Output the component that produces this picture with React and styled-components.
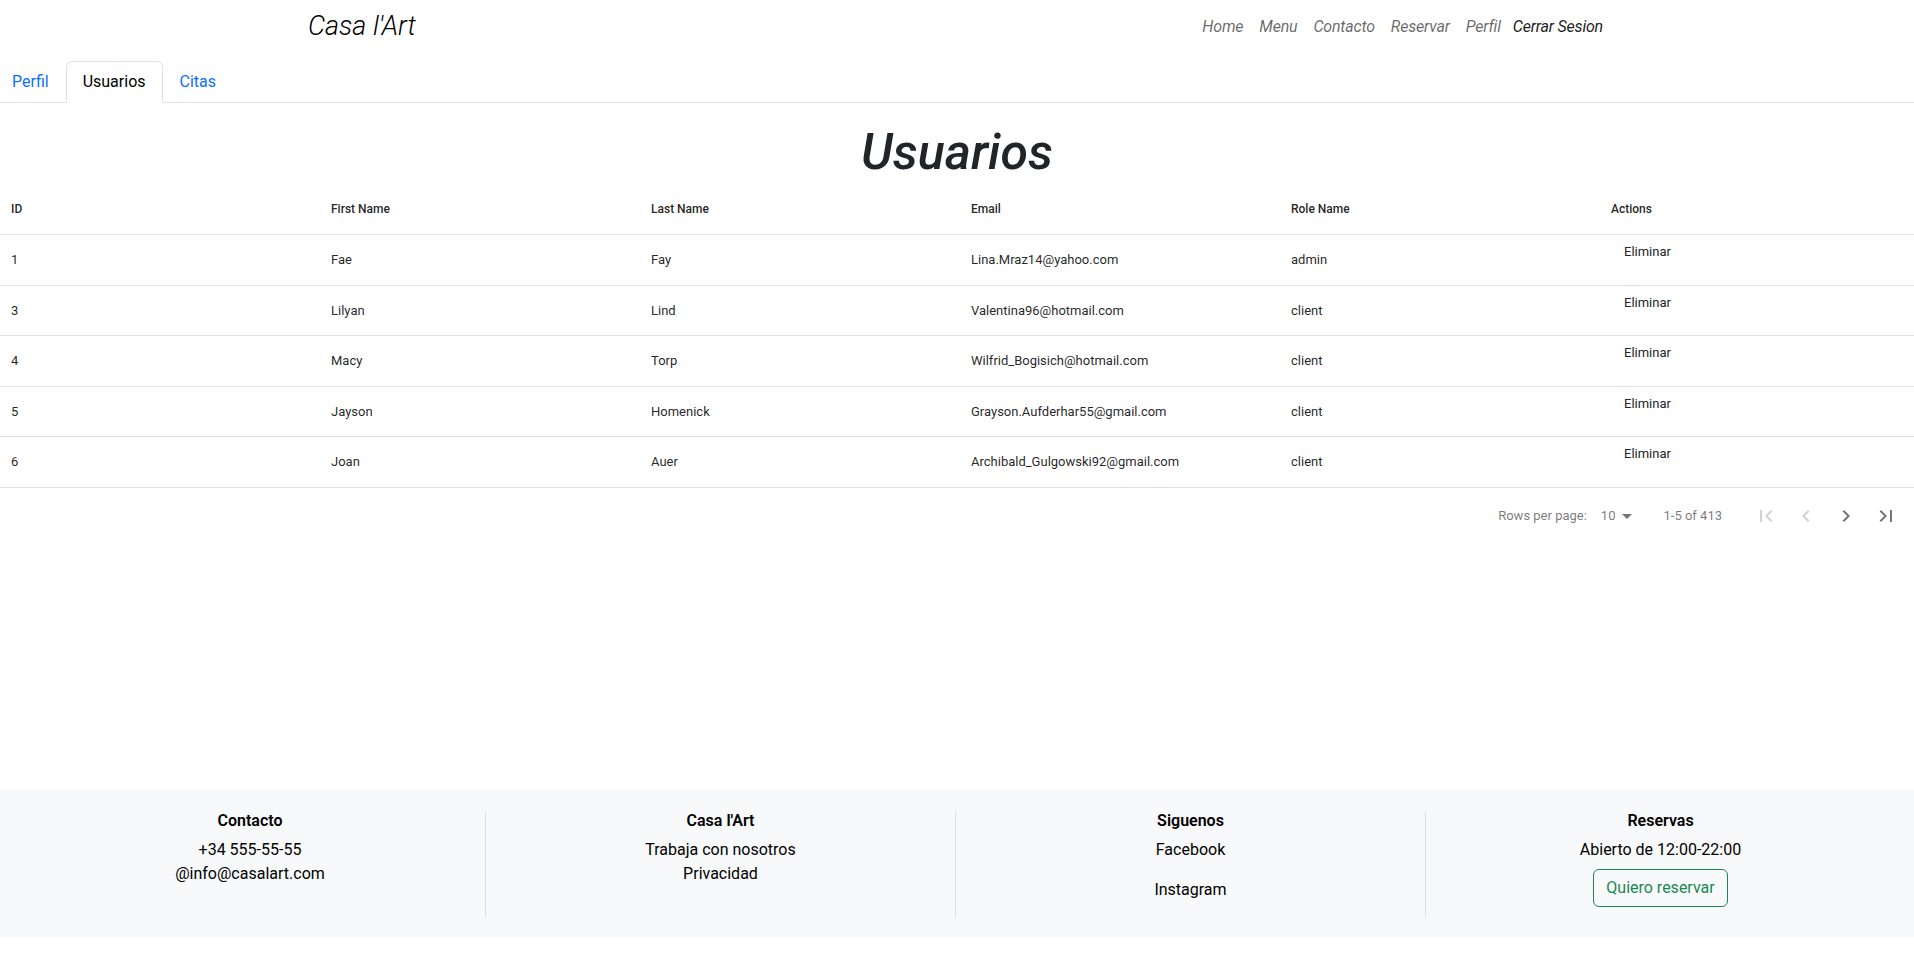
import React from "react";
import styled, { createGlobalStyle } from "styled-components";

const GlobalStyle = createGlobalStyle`
  * { box-sizing: border-box; }
  html, body { margin: 0; padding: 0; background: #fff; }
  body {
    font-family: Roboto, "Segoe UI", "Noto Sans", sans-serif;
    color: #212529;
    -webkit-font-smoothing: antialiased;
  }
`;

const Page = styled.div`
  min-height: 100vh;
  display: flex;
  flex-direction: column;
  padding-bottom: 17px;
`;

const Main = styled.main`
  flex: 1;
`;

const Navbar = styled.nav`
  height: 53px;
  display: flex;
  align-items: center;
  justify-content: space-between;
  width: 1320px;
  margin: 0 auto;
  padding: 0 10px 0 11px;
`;

const Brand = styled.a`
  font-size: 27px;
  font-weight: 300;
  font-style: italic;
  color: #000;
  text-decoration: none;
  line-height: 1.5;
`;

const NavList = styled.div`
  display: flex;
  align-items: center;
`;

const NavLink = styled.a`
  font-size: 16px;
  font-style: italic;
  font-weight: 400;
  line-height: 24px;
  padding: 0 ${(p) => (p.$tight ? "4px" : "8px")} 0 8px;
  color: ${(p) => (p.$strong ? "rgba(0,0,0,0.9)" : "rgba(0,0,0,0.6)")};
  text-decoration: none;
  letter-spacing: -0.2px;
`;

const Tabs = styled.ul`
  list-style: none;
  margin: 8px 0 0 -5px;
  padding: 0;
  display: flex;
  border-bottom: 1px solid #dee2e6;
`;

const Tab = styled.li`
  margin-bottom: -1px;
`;

const TabLink = styled.a`
  display: block;
  padding: 8px 16px;
  font-size: 16px;
  line-height: 24px;
  border: 1px solid transparent;
  border-radius: 6px 6px 0 0;
  text-decoration: none;
  color: ${(p) => (p.$active ? "#000" : "#0d6efd")};
  background: ${(p) => (p.$active ? "#fff" : "transparent")};
  border-color: ${(p) => (p.$active ? "#dee2e6 #dee2e6 #fff" : "transparent")};
`;

const Title = styled.h1`
  margin: 19px 0 0;
  text-align: center;
  font-size: 50px;
  line-height: 60px;
  font-weight: 500;
  font-style: italic;
  color: #212529;
`;

const TableWrap = styled.div`
  width: 100%;
  overflow: hidden;
  margin-top: 1px;
`;

const Row = styled.div`
  display: grid;
  grid-template-columns: repeat(6, 320px);
  height: ${(p) => (p.$head ? "52px" : "50.5px")};
  border-bottom: 1px solid rgba(0, 0, 0, 0.12);
  color: rgba(0, 0, 0, 0.87);
`;

const Cell = styled.div`
  display: flex;
  align-items: ${(p) => (p.$top ? "flex-start" : "center")};
  padding-left: 11px;
  font-size: ${(p) => (p.$head ? "12px" : "13px")};
  font-weight: ${(p) => (p.$head ? 500 : 400)};
  white-space: nowrap;
`;

const DeleteButton = styled.button`
  font-family: inherit;
  font-size: 13px;
  line-height: 19.5px;
  padding: 6px 12px;
  border: 1px solid transparent;
  border-radius: 6px;
  background: transparent;
  color: #212529;
  cursor: pointer;
`;

const Pagination = styled.div`
  height: 56px;
  display: flex;
  align-items: center;
  justify-content: flex-end;
  padding-right: 8px;
  font-size: 13px;
  color: rgba(0, 0, 0, 0.54);
`;

const PerPageLabel = styled.span`
  margin-right: 8px;
`;

const PerPageSelect = styled.span`
  display: flex;
  align-items: center;
  padding-left: 6px;
  color: rgba(0, 0, 0, 0.54);
  svg { fill: rgba(0, 0, 0, 0.54); }
`;

const RangeText = styled.span`
  margin: 0 24px;
`;

const PageButton = styled.button`
  width: 40px;
  height: 40px;
  padding: 8px;
  border: none;
  background: transparent;
  border-radius: 50%;
  display: flex;
  align-items: center;
  justify-content: center;
  svg { fill: ${(p) => (p.disabled ? "rgba(0,0,0,0.18)" : "rgba(0,0,0,0.54)")}; }
`;

const Footer = styled.footer`
  background: #f8f9fa;
  padding: 21px 19px 19px 15px;
  display: grid;
  grid-template-columns: repeat(4, 1fr);
`;

const FooterCol = styled.div`
  min-height: 107px;
  display: flex;
  flex-direction: column;
  align-items: center;
  border-left: ${(p) => (p.$first ? "none" : "1px solid #dee2e6")};
  color: #000;
`;

const FooterHeading = styled.h5`
  margin: 0 0 8px;
  font-size: 16px;
  line-height: 19px;
  font-weight: 600;
`;

const FooterLine = styled.a`
  font-size: 16px;
  line-height: 24px;
  color: #000;
  text-decoration: none;
  margin-bottom: ${(p) => (p.$gap ? "16px" : "0")};
`;

const ReserveButton = styled.button`
  margin-top: 7px;
  font-family: inherit;
  font-size: 16px;
  line-height: 24px;
  padding: 6px 12px;
  border: 1px solid #198754;
  border-radius: 6px;
  background: transparent;
  color: #198754;
`;

const Icon = ({ d, size = 24 }) => (
  <svg width={size} height={size} viewBox="0 0 24 24" aria-hidden="true">
    <path d={d} />
  </svg>
);

const users = [
  { id: 1, first: "Fae", last: "Fay", email: "Lina.Mraz14@yahoo.com", role: "admin" },
  { id: 3, first: "Lilyan", last: "Lind", email: "Valentina96@hotmail.com", role: "client" },
  { id: 4, first: "Macy", last: "Torp", email: "Wilfrid_Bogisich@hotmail.com", role: "client" },
  { id: 5, first: "Jayson", last: "Homenick", email: "Grayson.Aufderhar55@gmail.com", role: "client" },
  { id: 6, first: "Joan", last: "Auer", email: "Archibald_Gulgowski92@gmail.com", role: "client" },
];

const headers = ["ID", "First Name", "Last Name", "Email", "Role Name", "Actions"];

export default function App() {
  return (
    <Page>
      <GlobalStyle />
      <Main>
        <Navbar>
          <Brand href="#">Casa l'Art</Brand>
          <NavList>
            <NavLink href="#">Home</NavLink>
            <NavLink href="#">Menu</NavLink>
            <NavLink href="#">Contacto</NavLink>
            <NavLink href="#">Reservar</NavLink>
            <NavLink href="#" $tight>Perfil</NavLink>
            <NavLink href="#" $strong $tight>Cerrar Sesion</NavLink>
          </NavList>
        </Navbar>

        <Tabs>
          <Tab><TabLink href="#">Perfil</TabLink></Tab>
          <Tab><TabLink href="#" $active>Usuarios</TabLink></Tab>
          <Tab><TabLink href="#">Citas</TabLink></Tab>
        </Tabs>

        <Title>Usuarios</Title>

        <TableWrap>
          <Row $head>
            {headers.map((h) => (
              <Cell key={h} $head>{h}</Cell>
            ))}
          </Row>
          {users.map((u) => (
            <Row key={u.id}>
              <Cell>{u.id}</Cell>
              <Cell>{u.first}</Cell>
              <Cell>{u.last}</Cell>
              <Cell>{u.email}</Cell>
              <Cell>{u.role}</Cell>
              <Cell $top>
                <DeleteButton>Eliminar</DeleteButton>
              </Cell>
            </Row>
          ))}
        </TableWrap>

        <Pagination>
          <PerPageLabel>Rows per page:</PerPageLabel>
          <PerPageSelect>
            10
            <Icon d="M7 10l5 5 5-5z" />
          </PerPageSelect>
          <RangeText>1-5 of 413</RangeText>
          <PageButton disabled aria-label="First Page">
            <Icon d="M18.41 16.59L13.82 12l4.59-4.59L17 6l-6 6 6 6zM6 6h2v12H6z" />
          </PageButton>
          <PageButton disabled aria-label="Previous Page">
            <Icon d="M15.41 7.41L14 6l-6 6 6 6 1.41-1.41L10.83 12z" />
          </PageButton>
          <PageButton aria-label="Next Page">
            <Icon d="M10 6L8.59 7.41 13.17 12l-4.58 4.59L10 18l6-6z" />
          </PageButton>
          <PageButton aria-label="Last Page">
            <Icon d="M5.59 7.41L10.18 12l-4.59 4.59L7 18l6-6-6-6zM16 6h2v12h-2z" />
          </PageButton>
        </Pagination>
      </Main>

      <Footer>
        <FooterCol $first>
          <FooterHeading>Contacto</FooterHeading>
          <FooterLine>+34 555-55-55</FooterLine>
          <FooterLine>@info@casalart.com</FooterLine>
        </FooterCol>
        <FooterCol>
          <FooterHeading>Casa l'Art</FooterHeading>
          <FooterLine href="#">Trabaja con nosotros</FooterLine>
          <FooterLine href="#">Privacidad</FooterLine>
        </FooterCol>
        <FooterCol>
          <FooterHeading>Siguenos</FooterHeading>
          <FooterLine href="#" $gap>Facebook</FooterLine>
          <FooterLine href="#">Instagram</FooterLine>
        </FooterCol>
        <FooterCol>
          <FooterHeading>Reservas</FooterHeading>
          <FooterLine>Abierto de 12:00-22:00</FooterLine>
          <ReserveButton>Quiero reservar</ReserveButton>
        </FooterCol>
      </Footer>
    </Page>
  );
}
